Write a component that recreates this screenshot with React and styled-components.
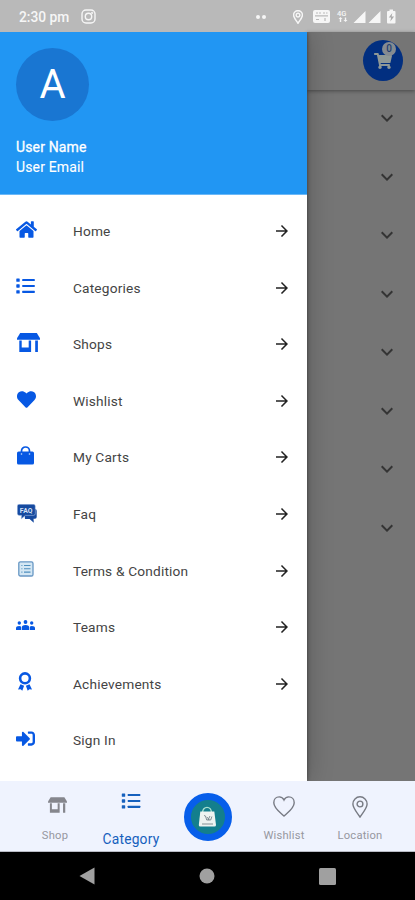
// Packages
import styled, { createGlobalStyle } from "styled-components"
import { FaHome, FaHeart, FaShoppingCart, FaSignInAlt } from "react-icons/fa"
import { MdArrowForward, MdKeyboardArrowDown } from "react-icons/md"

// Global
const GlobalStyle = createGlobalStyle`
  * {
    box-sizing: border-box;
  }

  body {
    margin: 0;
    font-family: Roboto, "Liberation Sans", sans-serif;
    background: #000;
  }

  svg {
    display: block;
    flex-shrink: 0;
  }
`

// Styled Components
const Screen = styled.div`
  display: flex;
  flex-direction: column;
  width: 415px;
  height: 900px;
  overflow: hidden;
`

const StatusBar = styled.div`
  display: flex;
  align-items: center;
  height: 32px;
  padding: 1px 18px 0 19px;
  color: #f6f6f6;
  background: #b9b9b9;
`

const Clock = styled.span`
  width: 62px;
  font-size: 13.8px;
  font-weight: 500;
  white-space: nowrap;
`

const StatusIcons = styled.div`
  display: flex;
  align-items: center;
  gap: 10px;
  margin-left: auto;
`

const Dots = styled.div`
  display: flex;
  gap: 2px;
  margin-right: 17px;

  i {
    width: 4px;
    height: 4px;
    border-radius: 50%;
    background: #f6f6f6;
  }
`

const Body = styled.div`
  display: flex;
  height: 749px;
`

const Drawer = styled.aside`
  position: relative;
  z-index: 1;
  width: 307px;
  flex-shrink: 0;
  background: #fff;
  box-shadow: 0 0 24px rgba(0, 0, 0, 0.25), 0 0 4px rgba(0, 0, 0, 0.45);
  clip-path: inset(0 -30px 0 0);
`

const Header = styled.header`
  height: 163px;
  padding: 16px 16px 0;
  color: #fff;
  background: #2196f3;
  border-bottom: 1px solid #6bb8f7;
`

const Avatar = styled.div`
  display: flex;
  align-items: center;
  justify-content: center;
  width: 73px;
  height: 73px;
  margin-bottom: 16px;
  font-size: 40px;
  border-radius: 50%;
  background: #1976d2;
`

const UserText = styled.div`
  font-size: 14px;
  line-height: 20px;
  letter-spacing: 0.15px;
  -webkit-text-stroke: ${({ $strong }) => ($strong ? "0.3px" : "0.1px")} #fff;
`

const Menu = styled.nav`
  padding-top: 8px;
`

const MenuRow = styled.div`
  display: flex;
  align-items: center;
  height: 56.55px;
  padding: 0 16px;
  font-size: 13.7px;
  letter-spacing: 0.18px;
  color: #444;
`

const IconCell = styled.div`
  width: 57px;
  padding-left: ${({ $inset }) => $inset || 0}px;
  padding-bottom: ${({ $lift }) => $lift ?? 3}px;
  color: #0758e3;
`

const RowArrow = styled(MdArrowForward)`
  margin-left: auto;
  color: #222;
`

const Backdrop = styled.main`
  flex: 1;
  background: #757575;
`

const AppBar = styled.div`
  display: flex;
  justify-content: flex-end;
  height: 58px;
  padding: 8px 12px 0 0;
  background: #757575;
  box-shadow: 0 1px 4px rgba(0, 0, 0, 0.4);
`

const CartButton = styled.div`
  position: relative;
  display: flex;
  align-items: flex-end;
  justify-content: center;
  width: 40px;
  height: 41px;
  padding-bottom: 11px;
  color: #8f9896;
  border-radius: 50%;
  background: #022f80;
`

const CartBadge = styled.span`
  position: absolute;
  top: 2px;
  left: 19px;
  width: 14px;
  height: 14px;
  font-size: 10px;
  font-weight: 500;
  line-height: 14px;
  text-align: center;
  color: #243f70;
  border-radius: 50%;
  background: #858b91;
`

const Panels = styled.div`
  display: flex;
  flex-direction: column;
  align-items: flex-end;
  gap: 34.5px;
  padding: 16px 16px 0 0;
  color: #343434;
`

const BottomNav = styled.nav`
  display: grid;
  grid-template-columns: 17px 76px 76px 77px 76px 76px 17px;
  height: 71px;
  background: #eff3fe;
  border-bottom: 1px solid #b9bcc5;
`

const Tab = styled.div`
  display: flex;
  flex-direction: column;
  align-items: center;
  justify-content: space-between;
  padding: ${({ $active }) => ($active ? "12px 0 4px" : "15px 0 7px")};
  font-size: ${({ $active }) => ($active ? 13.8 : 11.2)}px;
  line-height: 16px;
  letter-spacing: 0.2px;
  color: ${({ $active }) => ($active ? "#1560bd" : "#96979e")};
  grid-column: ${({ $col }) => $col};
`

const ShopTabIcon = styled.div`
  padding: 1px 0 0 5px;
`

const BagButton = styled.div`
  grid-column: 4;
  align-self: center;
  justify-self: center;
  display: flex;
  align-items: center;
  justify-content: center;
  width: 48px;
  height: 48px;
  margin-top: 2px;
  border: 7px solid #075eea;
  border-radius: 50%;
  background: #137f8d;
`

const SystemBar = styled.div`
  display: flex;
  align-items: center;
  height: 48px;
  padding: 0 79px;
  justify-content: space-between;
  background: #000;
`

// Icons
const ListIcon = ({ width = 19, height = 16 }) => (
  <svg width={width} height={height} viewBox="0 0 19 16" fill="currentColor">
    {[0.4, 6.3, 12.2].map((y) => (
      <g key={y}>
        <rect x="0.3" y={y} width="3.4" height="3.4" rx="0.6" />
        <rect x="6.2" y={y + 0.6} width="12.6" height="2.1" rx="0.4" />
      </g>
    ))}
  </svg>
)

const ShopIcon = ({ width = 23, height = 19, color = "currentColor" }) => (
  <svg width={width} height={height} viewBox="0 0 23 19" fill={color}>
    <path d="M3.2 0h16.6L23 5.3v1.5H0V5.3z" />
    <path d="M2.3 7.5h2.4v7h7V7.5h2.4V19H2.3zM18.2 7.5h2.7V19h-2.7z" />
  </svg>
)

const CartBagIcon = () => (
  <svg width="17" height="19" viewBox="0 0 17 19">
    <path
      d="M4.5 7V5a4 4 0 0 1 8 0v2"
      fill="none"
      stroke="currentColor"
      strokeWidth="1.7"
    />
    <rect y="5.6" width="17" height="13" rx="1.6" fill="currentColor" />
    <circle cx="4.5" cy="8" r="0.8" fill="#cfe0fb" />
    <circle cx="12.5" cy="8" r="0.8" fill="#cfe0fb" />
  </svg>
)

const FaqIcon = () => (
  <svg width="20" height="19" viewBox="0 0 20 19">
    <path
      d="M7 5h11q1.7 0 1.7 1.7v6.4q0 1.7-1.7 1.7h-1.5l.3 3.9-4.2-3.6H8z"
      fill="#164a9f"
    />
    <path
      d="M2 .3h14.5q1.8 0 1.8 1.8v7.5q0 1.8-1.8 1.8H8.4L4.2 15l.3-3.6H2Q.3 11.4.3 9.6V2.1Q.3.3 2 .3z"
      fill="#164a9f"
      stroke="#b9cdec"
      strokeWidth="0.5"
    />
    <text
      x="9.3"
      y="8.5"
      textAnchor="middle"
      fontSize="6.8"
      fontWeight="700"
      fill="#d5e2f6"
    >
      FAQ
    </text>
  </svg>
)

const TermsIcon = () => (
  <svg width="16" height="16" viewBox="0 0 16 16">
    <rect
      x="0.8"
      y="0.8"
      width="14.2"
      height="14.2"
      rx="1.6"
      fill="#d4e7f4"
      stroke="#6797c4"
      strokeWidth="1.3"
    />
    <path
      d="M6 4.5h6.5M6 7.8h6.5M6 11.1h6.5M3.4 4.5h1M3.4 7.8h1M3.4 11.1h1"
      stroke="#4f8fbd"
      strokeWidth="1.1"
    />
  </svg>
)

const TeamsIcon = () => (
  <svg width="19" height="11" viewBox="0 0 19 11" fill="currentColor">
    <circle cx="3.3" cy="3" r="1.7" />
    <circle cx="9.5" cy="2" r="1.9" />
    <circle cx="15.7" cy="3" r="1.7" />
    <path d="M0 10V8q0-2 3.300-2 1.300 0 1.700.4V10zM19 10V8q0-2-3.300-2-1.300 0-1.700.4V10zM5.700 10V7.500Q5.700 5 9.500 5t3.800 2.500V10z" />
  </svg>
)

const AwardIcon = () => (
  <svg width="14" height="19" viewBox="0 0 14 19">
    <circle
      cx="7"
      cy="6.3"
      r="4.9"
      fill="none"
      stroke="currentColor"
      strokeWidth="2.6"
    />
    <path
      d="M2.5 12.2l3.6 1.6-1.8 5-1.7-1.6L0 17.4zM11.5 12.2l-3.6 1.6 1.8 5 1.7-1.6 2.6.2z"
      fill="currentColor"
    />
  </svg>
)

const InstagramIcon = () => (
  <svg
    width="15"
    height="15"
    viewBox="0 0 15 15"
    fill="none"
    stroke="currentColor"
    strokeWidth="1.4"
  >
    <rect x="1" y="1" width="13" height="13" rx="4" />
    <circle cx="7.5" cy="7.5" r="3.2" />
    <circle cx="11.2" cy="3.8" r="0.4" />
  </svg>
)

const PinIcon = ({ width, height, strokeWidth = 1.4, color = "currentColor" }) => (
  <svg
    width={width}
    height={height}
    viewBox="0 0 16 22"
    fill="none"
    stroke={color}
    strokeWidth={strokeWidth}
  >
    <path d="M8 21C5.4 17 .9 12 .9 7.9a7.1 7.1 0 0 1 14.2 0C15.1 12 10.6 17 8 21z" />
    <circle cx="8" cy="8" r="2.9" />
  </svg>
)

const HeartOutline = () => (
  <svg width="22" height="21" viewBox="0 0 22 21">
    <path
      d="M11 20C7 16.300.8 12.200.8 6.700.8 3.200 3.200.9 6.200.9 8.300.9 10.100 2 11 4c.9-2 2.700-3.100 4.800-3.100 3 0 5.400 2.300 5.400 5.800C21.200 12.200 15 16.300 11 20z"
      fill="none"
      stroke="#777a83"
      strokeWidth="1.4"
    />
  </svg>
)

const StatusGlyphs = () => (
  <svg width="84" height="15" viewBox="0 0 84 15" fill="currentColor">
    <rect x="0" y="1" width="17" height="13" rx="2" />
    <path
      d="M2 6.800h13M3 4h2M6 4h2M10 4h2M13 4h1.500M3 10.500h3M12 9v3"
      stroke="#b9b9b9"
      strokeWidth="1.2"
    />
    <text x="24" y="6.800" fontSize="7.500" fontWeight="500">
      4G
    </text>
    <path d="M25.500 10l2-2 2 2h-1.300v3h-1.400v-3zM30.500 11h1.300V8.500h1.400V11h1.300l-2 2z" />
    <path d="M40.500 14l12-12v12zM55.500 14l12-12v12z" />
    <path d="M75 2h1.500V.5H80V2h1.500q1 0 1 1v10.500q0 1-1 1H75q-1 0-1-1V3q0-1 1-1z" />
    <path d="M79.300 4l-3.500 4.500h2.300l-.8 4 3.800-5h-2.500z" fill="#aaa" />
  </svg>
)

const ShoppingBagLogo = () => (
  <svg width="21" height="23" viewBox="0 0 21 23">
    <path
      d="M5.500 7C5.500-.5 14.500-.5 14.500 7"
      fill="none"
      stroke="#a6dfd0"
      strokeWidth="1.4"
    />
    <path
      d="M3.300 5.500h14l1.700 13.500q0 1.500-1.500 1.500H3.300q-1.600 0-1.500-1.500z"
      fill="#edf3f1"
    />
    <path
      d="M7 9.500l1.500.5 1.200 4h4l1.200-3.500M10 11l2.300 3M13 10l-2 4M5 18h11"
      fill="none"
      stroke="#67767e"
      strokeWidth="0.8"
    />
  </svg>
)

// Data
const menuItems = [
  { label: "Home", icon: <FaHome size={21} /> },
  { label: "Categories", icon: <ListIcon /> },
  { label: "Shops", icon: <ShopIcon />, inset: 0.5, lift: 3 },
  { label: "Wishlist", icon: <FaHeart size={19} />, inset: 0.5 },
  { label: "My Carts", icon: <CartBagIcon />, inset: 1 },
  { label: "Faq", icon: <FaqIcon />, inset: 1, lift: 1 },
  { label: "Terms & Condition", icon: <TermsIcon />, inset: 2, lift: 4 },
  { label: "Teams", icon: <TeamsIcon /> },
  { label: "Achievements", icon: <AwardIcon />, inset: 2, lift: 4 },
  { label: "Sign In", icon: <FaSignInAlt size={19} />, noArrow: true },
]

const panels = Array.from({ length: 8 }, (_, i) => i)

const App = () => (
  <>
    <GlobalStyle />
    <Screen>
      <StatusBar>
        <Clock>2:30 pm</Clock>
        <InstagramIcon />
        <StatusIcons>
          <Dots>
            <i />
            <i />
          </Dots>
          <PinIcon width={10} height={14} strokeWidth={2.4} />
          <StatusGlyphs />
        </StatusIcons>
      </StatusBar>

      <Body>
        <Drawer>
          <Header>
            <Avatar>A</Avatar>
            <UserText $strong>User Name</UserText>
            <UserText>User Email</UserText>
          </Header>
          <Menu>
            {menuItems.map(({ label, icon, inset, lift, noArrow }) => (
              <MenuRow key={label}>
                <IconCell $inset={inset} $lift={lift}>
                  {icon}
                </IconCell>
                {label}
                {!noArrow && <RowArrow size={18} />}
              </MenuRow>
            ))}
          </Menu>
        </Drawer>

        <Backdrop>
          <AppBar>
            <CartButton>
              <FaShoppingCart size={18} />
              <CartBadge>0</CartBadge>
            </CartButton>
          </AppBar>
          <Panels>
            {panels.map((panel) => (
              <MdKeyboardArrowDown key={panel} size={24} />
            ))}
          </Panels>
        </Backdrop>
      </Body>

      <BottomNav>
        <Tab $col={2}>
          <ShopTabIcon>
            <ShopIcon width={19} height={16} color="#85868d" />
          </ShopTabIcon>
          Shop
        </Tab>
        <Tab $col={3} $active>
          <ListIcon width={20} height={16} />
          Category
        </Tab>
        <BagButton>
          <ShoppingBagLogo />
        </BagButton>
        <Tab $col={5}>
          <HeartOutline />
          Wishlist
        </Tab>
        <Tab $col={6}>
          <PinIcon width={16} height={22} color="#777a83" />
          Location
        </Tab>
      </BottomNav>

      <SystemBar>
        <svg width="16" height="18" viewBox="0 0 16 18" fill="#a0a0a0">
          <path d="M15.500.5v17L.5 9z" />
        </svg>
        <svg width="16" height="16" viewBox="0 0 16 16" fill="#a0a0a0">
          <circle cx="8" cy="8" r="7.500" />
        </svg>
        <svg width="17" height="17" viewBox="0 0 17 17" fill="#a0a0a0">
          <rect width="17" height="17" rx="1.500" />
        </svg>
      </SystemBar>
    </Screen>
  </>
)

export default App
